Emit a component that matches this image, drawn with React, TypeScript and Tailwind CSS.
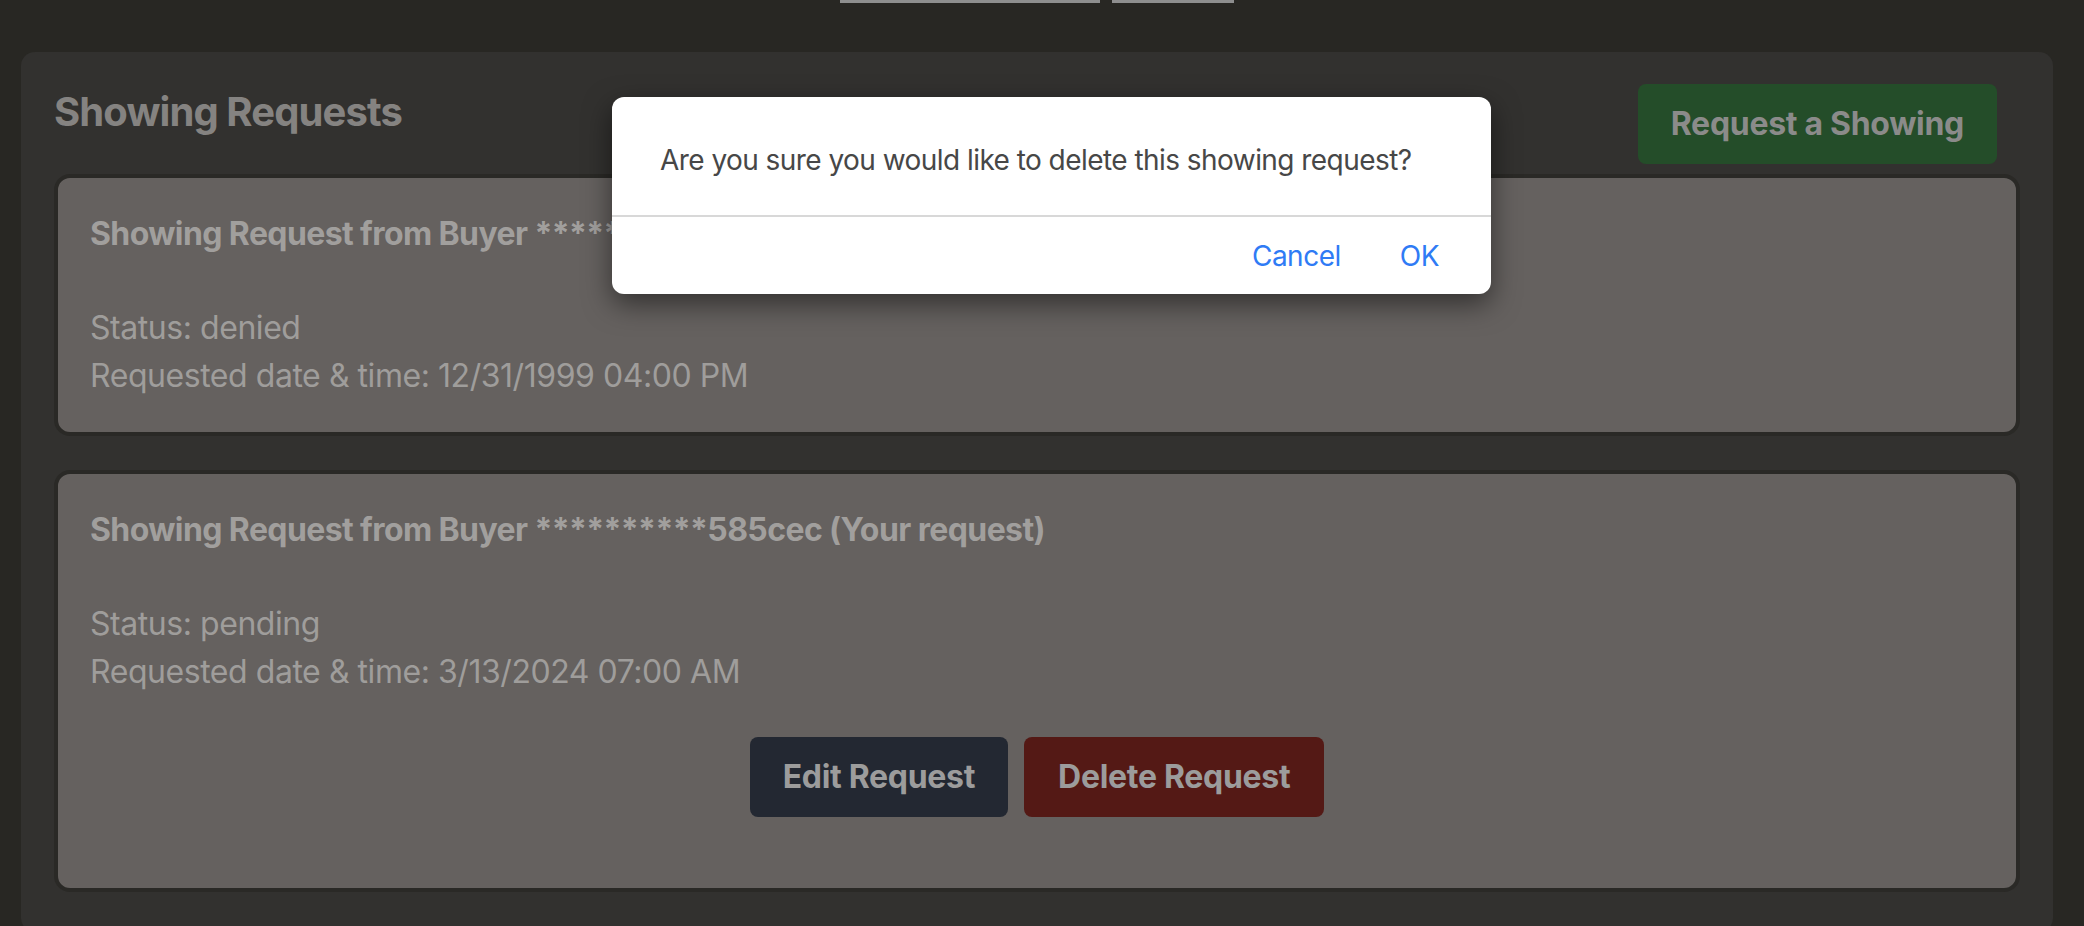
import React from 'react';

const requests = [
  {
    id: 1,
    buyer: '**********a91f2d',
    mine: false,
    status: 'denied',
    when: '12/31/1999 04:00 PM',
  },
  {
    id: 2,
    buyer: '**********585cec',
    mine: true,
    status: 'pending',
    when: '3/13/2024 07:00 AM',
  },
];

export default function App() {
  return (
    <div className="relative h-[926px] overflow-hidden bg-[#282723] font-['Inter','Liberation_Sans',sans-serif]">
      {/* top tabs (cut off) */}
      <div className="flex h-[3px] pl-[840px]">
        <div className="w-[260px] bg-[#8e8e8e]" />
        <div className="w-[12px]" />
        <div className="w-[122px] bg-[#8e8e8e]" />
      </div>

      <div className="mt-[49px] ml-[21px] mr-[31px] rounded-[14px] bg-[#32312f] px-[33px] pt-[32px] pb-[40px]">
        <div className="flex items-start justify-between mb-[10px]">
          <h1 className="text-[40px] leading-[56px] font-bold text-[#858381] tracking-[-0.9px]">
            Showing Requests
          </h1>
          <button className="mr-[23px] rounded-[8px] bg-[#244d29] px-[33px] py-[16px] text-[32px] leading-[48px] font-bold text-[#8b8b8a] tracking-[-0.3px]">
            Request a Showing
          </button>
        </div>

        <div className="flex flex-col gap-[34px]">
          {requests.map((r) => (
            <div
              key={r.id}
              className="rounded-[16px] border-4 border-[#2a2926] bg-[#65615f] px-[32px] pt-[32px] pb-[32px] text-[32px] leading-[48px] text-[#9f9d9b] tracking-[-0.45px]"
            >
              <p className="font-bold text-[#a19f9d] tracking-[-0.6px]">
                Showing Request from Buyer {r.buyer}
                {r.mine ? ' (Your request)' : ''}
              </p>
              <p className="mt-[46px]">Status: {r.status}</p>
              <p>Requested date &amp; time: {r.when}</p>
              {r.mine && (
                <div className="mt-[41px] mb-[39px] flex justify-center gap-[16px]">
                  <button className="rounded-[8px] bg-[#232832] px-[33px] py-[16px] font-bold text-[#9c9c9c] tracking-[-0.3px]">
                    Edit Request
                  </button>
                  <button className="rounded-[8px] bg-[#541915] px-[34px] py-[16px] font-bold text-[#9c9c9c] tracking-[-0.3px]">
                    Delete Request
                  </button>
                </div>
              )}
            </div>
          ))}
        </div>
      </div>

      {/* confirm dialog */}
      <div className="absolute left-[612px] top-[97px] w-[879px] rounded-[12px] bg-white shadow-[0_10px_28px_rgba(0,0,0,0.5)]">
        <div className="h-[118px] pl-[48px] pt-[45px] text-[28px] leading-[36px] text-[#474747] tracking-[-0.55px]">
          Are you sure you would like to delete this showing request?
        </div>
        <div className="h-[2px] bg-[#d8d8d8]" />
        <div className="flex h-[77px] items-center justify-end gap-[59px] pr-[52px] text-[28px] text-[#2f7bf5] tracking-[-0.5px]">
          <button>Cancel</button>
          <button>OK</button>
        </div>
      </div>
    </div>
  );
}
